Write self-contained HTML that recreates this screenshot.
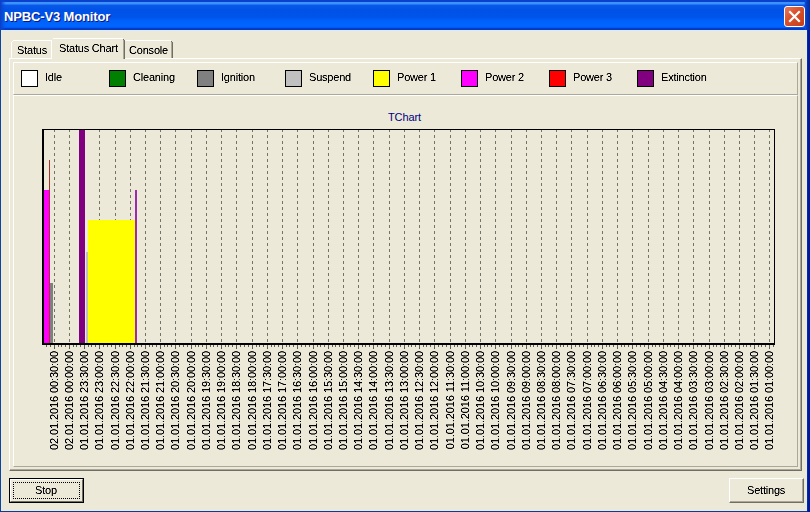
<!DOCTYPE html>
<html><head><meta charset="utf-8"><style>
*{margin:0;padding:0;box-sizing:border-box}
html,body{width:810px;height:512px;overflow:hidden}
body{position:relative;background:#0831d9;font-family:"Liberation Sans",sans-serif;font-size:11px;color:#000}
.abs{position:absolute}
#title{position:absolute;left:0;top:0;width:810px;height:30px;
background:linear-gradient(to bottom,#0a3ec8 0px,#0a44d0 2px,#3d95ff 2px,#3a90ff 4px,#0a5ae8 5px,#0052e6 10px,#0054ea 17px,#0062fa 21px,#0066ff 26px,#0058f0 28px,#003cc8 28.5px,#003cc8 30px)}
#ttext{position:absolute;left:4px;top:9px;letter-spacing:-0.15px;font-size:13px;font-weight:bold;color:#fff;line-height:15px;text-shadow:1px 1px 0 #0a1883;white-space:nowrap}
#close{position:absolute;left:784px;top:6px;width:21px;height:21px;border:1px solid #fff;border-radius:3px;
background:linear-gradient(135deg,#e8795c 0%,#d9532f 40%,#c63c14 100%)}
#lb{position:absolute;left:0;top:30px;width:1px;height:482px;background:#1b4380}
#rb{position:absolute;left:807px;top:30px;width:3px;height:482px;background:linear-gradient(to right,#1a3698,#001a98 1px,#001a98)}
#bb{position:absolute;left:0;top:511px;width:807px;height:1px;background:#1a3b7a}
#client{position:absolute;left:1px;top:30px;width:806px;height:481px;background:#ece9d8;border:1px solid #dcecfc}
.t{position:absolute;white-space:nowrap;line-height:13px;letter-spacing:-0.2px;filter:url(#cr)}
.tab{position:absolute;background:#ece9d8;border-top:1px solid #fff;border-left:1px solid #fff;border-right:1px solid #716f64}
#panel{position:absolute;left:9px;top:58px;width:793px;height:413px;border-top:1px solid #fff;border-left:1px solid #fff;border-right:1px solid #716f64;border-bottom:1px solid #716f64}
#panel::after{content:"";position:absolute;left:0;top:0;right:0;bottom:0;border-right:1px solid #aca899;border-bottom:1px solid #aca899}
#legp{position:absolute;left:13px;top:62px;width:785px;height:33px;border-top:1px solid #fff;border-left:1px solid #fff;border-right:1px solid #aca899;border-bottom:1px solid #aca899}
#chp{position:absolute;left:13px;top:95px;width:785px;height:372px;border-top:1px solid #fff;border-left:1px solid #fff;border-right:1px solid #aca899;border-bottom:1px solid #aca899}
.lbox{position:absolute;top:70px;width:17px;height:17px;border:1px solid #000}
.btn{position:absolute;top:478px;width:75px;height:25px;background:#ece9d8}
svg text{font-family:"Liberation Sans",sans-serif;font-size:11px;letter-spacing:-0.1px}
</style></head><body>
<svg width="0" height="0" style="position:absolute"><defs><filter id="cr" x="-20%" y="-30%" width="140%" height="160%"><feComponentTransfer><feFuncA type="linear" slope="1.6" intercept="-0.2"/></feComponentTransfer></filter></defs></svg>
<div id="title"><div class="abs" style="left:804px;top:0;width:6px;height:30px;background:linear-gradient(to right,rgba(8,60,210,0) 0px,#0a48d8 1.5px,#0838b8 3px,#062a9c 6px)"></div><div class="abs" style="left:0;top:0;width:6px;height:30px;background:linear-gradient(to left,rgba(8,60,210,0) 0px,rgba(10,72,216,0.6) 3px,#0a44cc 5px,#0a3ec4 6px)"></div><div id="ttext">NPBC-V3 Monitor</div>
<div id="close"><svg width="19" height="19" style="position:absolute;left:0;top:0"><path d="M5 5L14 14M14 5L5 14" stroke="#fff" stroke-width="2.2" stroke-linecap="square"/></svg></div>
</div>
<div id="lb"></div><div id="rb"></div><div id="bb"></div>
<div id="client"></div>
<div id="panel"></div>
<div class="abs" style="left:11px;top:42px;width:1px;height:16px;background:#ffffff"></div>
<div class="abs" style="left:12px;top:41px;width:1px;height:1px;background:#ffffff"></div>
<div class="abs" style="left:13px;top:40px;width:38px;height:1px;background:#ffffff"></div>
<div class="abs" style="left:125px;top:40px;width:46px;height:1px;background:#ffffff"></div>
<div class="abs" style="left:171px;top:41px;width:1px;height:1px;background:#716f64"></div>
<div class="abs" style="left:171px;top:42px;width:1px;height:16px;background:#aca899"></div>
<div class="abs" style="left:172px;top:42px;width:1px;height:16px;background:#716f64"></div>
<div class="abs" style="left:51px;top:40px;width:73px;height:19px;background:#ece9d8"></div>
<div class="abs" style="left:51px;top:40px;width:1px;height:19px;background:#ffffff"></div>
<div class="abs" style="left:52px;top:39px;width:1px;height:1px;background:#ffffff"></div>
<div class="abs" style="left:53px;top:38px;width:70px;height:1px;background:#ffffff"></div>
<div class="abs" style="left:52px;top:39px;width:71px;height:1px;background:#ece9d8"></div>
<div class="abs" style="left:123px;top:39px;width:1px;height:1px;background:#716f64"></div>
<div class="abs" style="left:123px;top:40px;width:1px;height:19px;background:#aca899"></div>
<div class="abs" style="left:124px;top:40px;width:1px;height:19px;background:#716f64"></div>
<div class="t" style="left:17px;top:44px">Status</div>
<div class="t" style="left:59px;top:42px">Status Chart</div>
<div class="t" style="left:129px;top:44px">Console</div>
<div id="legp"></div>
<div id="chp"></div>
<div class="lbox" style="left:21px;background:#ffffff"></div><div class="t" style="left:45px;top:71px">Idle</div>
<div class="lbox" style="left:109px;background:#008000"></div><div class="t" style="left:133px;top:71px">Cleaning</div>
<div class="lbox" style="left:197px;background:#808080"></div><div class="t" style="left:221px;top:71px">Ignition</div>
<div class="lbox" style="left:285px;background:#c0c0c0"></div><div class="t" style="left:309px;top:71px">Suspend</div>
<div class="lbox" style="left:373px;background:#ffff00"></div><div class="t" style="left:397px;top:71px">Power 1</div>
<div class="lbox" style="left:461px;background:#ff00ff"></div><div class="t" style="left:485px;top:71px">Power 2</div>
<div class="lbox" style="left:549px;background:#ff0000"></div><div class="t" style="left:573px;top:71px">Power 3</div>
<div class="lbox" style="left:637px;background:#800080"></div><div class="t" style="left:661px;top:71px">Extinction</div>
<svg class="abs" style="left:0;top:0" width="810" height="512">
<text x="404.5" y="121" text-anchor="middle" fill="#000080">TChart</text>
<path d="M54.5 129V343M69.5 129V343M84.5 129V343M99.5 129V343M115.5 129V343M130.5 129V343M145.5 129V343M160.5 129V343M175.5 129V343M191.5 129V343M206.5 129V343M221.5 129V343M236.5 129V343M252.5 129V343M267.5 129V343M282.5 129V343M297.5 129V343M313.5 129V343M328.5 129V343M343.5 129V343M358.5 129V343M373.5 129V343M389.5 129V343M404.5 129V343M419.5 129V343M434.5 129V343M450.5 129V343M465.5 129V343M480.5 129V343M495.5 129V343M511.5 129V343M526.5 129V343M541.5 129V343M556.5 129V343M571.5 129V343M587.5 129V343M602.5 129V343M617.5 129V343M632.5 129V343M648.5 129V343M663.5 129V343M678.5 129V343M693.5 129V343M709.5 129V343M724.5 129V343M739.5 129V343M754.5 129V343M769.5 129V343" stroke="#747466" stroke-width="1" stroke-dasharray="3 3" fill="none"/>
<g shape-rendering="crispEdges">
<rect x="44" y="190" width="6" height="153" fill="#ff00ff"/>
<rect x="49" y="160" width="1" height="183" fill="#b03030"/>
<rect x="50" y="283" width="3" height="60" fill="#808080"/>
<rect x="79" y="130" width="6" height="213" fill="#800080"/>
<rect x="86" y="252" width="2" height="91" fill="#c0c0c0"/>
<rect x="88" y="220" width="47" height="123" fill="#ffff00"/>
<rect x="135" y="190" width="2" height="153" fill="#a028b0"/>
<path d="M42 129H775M774.5 129V345M43 130V345M42 343.5H775" stroke="#000" fill="none"/>
<rect x="42" y="129" width="2" height="216" fill="#000"/>
<rect x="42" y="343" width="733" height="2" fill="#000"/>
<rect x="42" y="129" width="733" height="1" fill="#000"/>
<rect x="774" y="129" width="1" height="216" fill="#000"/>
<path d="M54.5 345V349M69.5 345V349M84.5 345V349M99.5 345V349M115.5 345V349M130.5 345V349M145.5 345V349M160.5 345V349M175.5 345V349M191.5 345V349M206.5 345V349M221.5 345V349M236.5 345V349M252.5 345V349M267.5 345V349M282.5 345V349M297.5 345V349M313.5 345V349M328.5 345V349M343.5 345V349M358.5 345V349M373.5 345V349M389.5 345V349M404.5 345V349M419.5 345V349M434.5 345V349M450.5 345V349M465.5 345V349M480.5 345V349M495.5 345V349M511.5 345V349M526.5 345V349M541.5 345V349M556.5 345V349M571.5 345V349M587.5 345V349M602.5 345V349M617.5 345V349M632.5 345V349M648.5 345V349M663.5 345V349M678.5 345V349M693.5 345V349M709.5 345V349M724.5 345V349M739.5 345V349M754.5 345V349M769.5 345V349M46.5 345V347M50.5 345V347M58.5 345V347M61.5 345V347M65.5 345V347M73.5 345V347M76.5 345V347M80.5 345V347M88.5 345V347M91.5 345V347M95.5 345V347M103.5 345V347M107.5 345V347M111.5 345V347M119.5 345V347M122.5 345V347M126.5 345V347M134.5 345V347M137.5 345V347M141.5 345V347M149.5 345V347M152.5 345V347M156.5 345V347M164.5 345V347M167.5 345V347M171.5 345V347M179.5 345V347M183.5 345V347M187.5 345V347M195.5 345V347M198.5 345V347M202.5 345V347M210.5 345V347M213.5 345V347M217.5 345V347M225.5 345V347M228.5 345V347M232.5 345V347M240.5 345V347M244.5 345V347M248.5 345V347M256.5 345V347M259.5 345V347M263.5 345V347M271.5 345V347M274.5 345V347M278.5 345V347M286.5 345V347M289.5 345V347M293.5 345V347M301.5 345V347M305.5 345V347M309.5 345V347M317.5 345V347M320.5 345V347M324.5 345V347M332.5 345V347M335.5 345V347M339.5 345V347M347.5 345V347M350.5 345V347M354.5 345V347M362.5 345V347M365.5 345V347M369.5 345V347M377.5 345V347M381.5 345V347M385.5 345V347M393.5 345V347M396.5 345V347M400.5 345V347M408.5 345V347M411.5 345V347M415.5 345V347M423.5 345V347M426.5 345V347M430.5 345V347M438.5 345V347M442.5 345V347M446.5 345V347M454.5 345V347M457.5 345V347M461.5 345V347M469.5 345V347M472.5 345V347M476.5 345V347M484.5 345V347M487.5 345V347M491.5 345V347M499.5 345V347M503.5 345V347M507.5 345V347M515.5 345V347M518.5 345V347M522.5 345V347M530.5 345V347M533.5 345V347M537.5 345V347M545.5 345V347M548.5 345V347M552.5 345V347M560.5 345V347M563.5 345V347M567.5 345V347M575.5 345V347M579.5 345V347M583.5 345V347M591.5 345V347M594.5 345V347M598.5 345V347M606.5 345V347M609.5 345V347M613.5 345V347M621.5 345V347M624.5 345V347M628.5 345V347M636.5 345V347M640.5 345V347M644.5 345V347M652.5 345V347M655.5 345V347M659.5 345V347M667.5 345V347M670.5 345V347M674.5 345V347M682.5 345V347M685.5 345V347M689.5 345V347M697.5 345V347M701.5 345V347M705.5 345V347M713.5 345V347M716.5 345V347M720.5 345V347M728.5 345V347M731.5 345V347M735.5 345V347M743.5 345V347M746.5 345V347M750.5 345V347M758.5 345V347M761.5 345V347M765.5 345V347M773.5 345V347" stroke="#5e5e52" fill="none"/>
</g>
<g fill="#000" filter="url(#cr)">
<text transform="translate(58,351) rotate(-90)" text-anchor="end">02.01.2016 00:30:00</text>
<text transform="translate(73,351) rotate(-90)" text-anchor="end">02.01.2016 00:00:00</text>
<text transform="translate(88,351) rotate(-90)" text-anchor="end">01.01.2016 23:30:00</text>
<text transform="translate(103,351) rotate(-90)" text-anchor="end">01.01.2016 23:00:00</text>
<text transform="translate(119,351) rotate(-90)" text-anchor="end">01.01.2016 22:30:00</text>
<text transform="translate(134,351) rotate(-90)" text-anchor="end">01.01.2016 22:00:00</text>
<text transform="translate(149,351) rotate(-90)" text-anchor="end">01.01.2016 21:30:00</text>
<text transform="translate(164,351) rotate(-90)" text-anchor="end">01.01.2016 21:00:00</text>
<text transform="translate(179,351) rotate(-90)" text-anchor="end">01.01.2016 20:30:00</text>
<text transform="translate(195,351) rotate(-90)" text-anchor="end">01.01.2016 20:00:00</text>
<text transform="translate(210,351) rotate(-90)" text-anchor="end">01.01.2016 19:30:00</text>
<text transform="translate(225,351) rotate(-90)" text-anchor="end">01.01.2016 19:00:00</text>
<text transform="translate(240,351) rotate(-90)" text-anchor="end">01.01.2016 18:30:00</text>
<text transform="translate(256,351) rotate(-90)" text-anchor="end">01.01.2016 18:00:00</text>
<text transform="translate(271,351) rotate(-90)" text-anchor="end">01.01.2016 17:30:00</text>
<text transform="translate(286,351) rotate(-90)" text-anchor="end">01.01.2016 17:00:00</text>
<text transform="translate(301,351) rotate(-90)" text-anchor="end">01.01.2016 16:30:00</text>
<text transform="translate(317,351) rotate(-90)" text-anchor="end">01.01.2016 16:00:00</text>
<text transform="translate(332,351) rotate(-90)" text-anchor="end">01.01.2016 15:30:00</text>
<text transform="translate(347,351) rotate(-90)" text-anchor="end">01.01.2016 15:00:00</text>
<text transform="translate(362,351) rotate(-90)" text-anchor="end">01.01.2016 14:30:00</text>
<text transform="translate(377,351) rotate(-90)" text-anchor="end">01.01.2016 14:00:00</text>
<text transform="translate(393,351) rotate(-90)" text-anchor="end">01.01.2016 13:30:00</text>
<text transform="translate(408,351) rotate(-90)" text-anchor="end">01.01.2016 13:00:00</text>
<text transform="translate(423,351) rotate(-90)" text-anchor="end">01.01.2016 12:30:00</text>
<text transform="translate(438,351) rotate(-90)" text-anchor="end">01.01.2016 12:00:00</text>
<text transform="translate(454,351) rotate(-90)" text-anchor="end">01.01.2016 11:30:00</text>
<text transform="translate(469,351) rotate(-90)" text-anchor="end">01.01.2016 11:00:00</text>
<text transform="translate(484,351) rotate(-90)" text-anchor="end">01.01.2016 10:30:00</text>
<text transform="translate(499,351) rotate(-90)" text-anchor="end">01.01.2016 10:00:00</text>
<text transform="translate(515,351) rotate(-90)" text-anchor="end">01.01.2016 09:30:00</text>
<text transform="translate(530,351) rotate(-90)" text-anchor="end">01.01.2016 09:00:00</text>
<text transform="translate(545,351) rotate(-90)" text-anchor="end">01.01.2016 08:30:00</text>
<text transform="translate(560,351) rotate(-90)" text-anchor="end">01.01.2016 08:00:00</text>
<text transform="translate(575,351) rotate(-90)" text-anchor="end">01.01.2016 07:30:00</text>
<text transform="translate(591,351) rotate(-90)" text-anchor="end">01.01.2016 07:00:00</text>
<text transform="translate(606,351) rotate(-90)" text-anchor="end">01.01.2016 06:30:00</text>
<text transform="translate(621,351) rotate(-90)" text-anchor="end">01.01.2016 06:00:00</text>
<text transform="translate(636,351) rotate(-90)" text-anchor="end">01.01.2016 05:30:00</text>
<text transform="translate(652,351) rotate(-90)" text-anchor="end">01.01.2016 05:00:00</text>
<text transform="translate(667,351) rotate(-90)" text-anchor="end">01.01.2016 04:30:00</text>
<text transform="translate(682,351) rotate(-90)" text-anchor="end">01.01.2016 04:00:00</text>
<text transform="translate(697,351) rotate(-90)" text-anchor="end">01.01.2016 03:30:00</text>
<text transform="translate(713,351) rotate(-90)" text-anchor="end">01.01.2016 03:00:00</text>
<text transform="translate(728,351) rotate(-90)" text-anchor="end">01.01.2016 02:30:00</text>
<text transform="translate(743,351) rotate(-90)" text-anchor="end">01.01.2016 02:00:00</text>
<text transform="translate(758,351) rotate(-90)" text-anchor="end">01.01.2016 01:30:00</text>
<text transform="translate(773,351) rotate(-90)" text-anchor="end">01.01.2016 01:00:00</text>
</g>
</svg>
<div class="btn" style="left:9px;border:1px solid #000"><div class="abs" style="left:0;top:0;right:0;bottom:0;border-top:1px solid #fff;border-left:1px solid #fff;border-right:1px solid #716f64;border-bottom:1px solid #716f64"></div>
<div class="abs" style="left:3px;top:3px;width:67px;height:17px;border:1px dotted #000"></div></div>
<div class="t" style="left:35px;top:484px">Stop</div>
<div class="btn" style="left:729px;border-top:1px solid #fff;border-left:1px solid #fff;border-right:1px solid #716f64;border-bottom:1px solid #716f64"><div class="abs" style="left:0;top:0;right:0;bottom:0;border-right:1px solid #aca899;border-bottom:1px solid #aca899"></div></div>
<div class="t" style="left:747px;top:484px">Settings</div>
</body></html>
